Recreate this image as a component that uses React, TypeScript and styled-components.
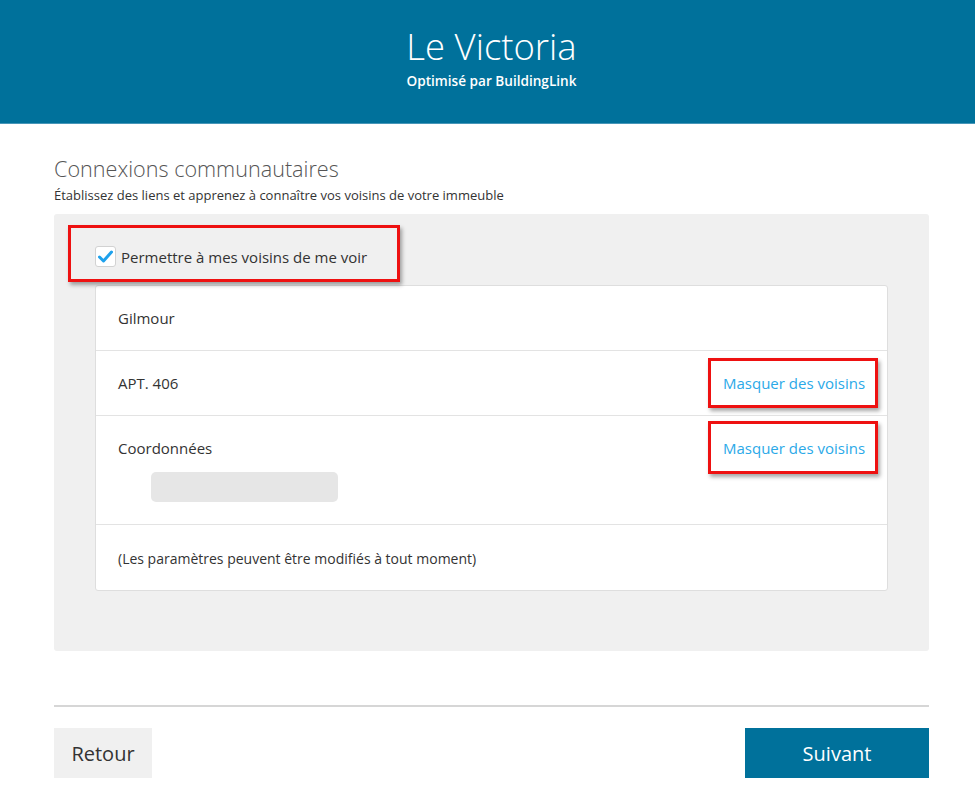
import React from "react";
import styled, { createGlobalStyle } from "styled-components";

const Global = createGlobalStyle`
  html, body { margin: 0; padding: 0; background: #fff; }
  body { font-family: "Open Sans", "Noto Sans", sans-serif; color: #333; }
  * { box-sizing: border-box; }
`;

const Header = styled.header`
  height: 124px;
  background: #00719b;
  border-bottom: 1px solid #4796b8;
  padding: 24px 0 0 8px;
  display: flex;
  flex-direction: column;
  align-items: center;
  color: #fff;
`;

const Title = styled.h1`
  margin: 0;
  font-size: 36.5px;
  font-weight: 300;
  line-height: 44px;
`;

const Powered = styled.div`
  margin-top: 4px;
  font-size: 13.6px;
  font-weight: 600;
  line-height: 18px;
`;

const Main = styled.main`
  margin: 0 46px 0 54px;
  padding-top: 32px;
`;

const SectionTitle = styled.h2`
  margin: 0;
  font-size: 21.6px;
  font-weight: 300;
  color: #555;
  line-height: 26px;
`;

const SectionSub = styled.p`
  margin: 4px 0 0;
  font-size: 13px;
  line-height: 18px;
  color: #333;
`;

const Panel = styled.section`
  margin-top: 10px;
  background: #f0f0f0;
  border-radius: 3px;
  padding: 11px 41px 60px 41px;
`;

const Highlight = styled.div<{ $h: number; $top?: number }>`
  display: inline-flex;
  align-items: center;
  height: ${(p) => p.$h}px;
  margin-top: ${(p) => p.$top ?? 0}px;
  border: 3px solid #ee1111;
  box-shadow: 2px 3px 4px rgba(0, 0, 0, 0.35);
`;

const CheckHighlight = styled(Highlight)`
  margin-left: -27px;
  padding: 6px 0 0 24px;
  width: 332px;
  margin-bottom: 3px;
`;

const CheckLabel = styled.label`
  display: flex;
  align-items: center;
  gap: 5px;
  font-size: 15px;
  color: #333;
  cursor: pointer;
`;

const Box = styled.span`
  width: 21px;
  height: 21px;
  background: #fff;
  border: 1px solid #d2d2d2;
  border-radius: 3px;
  display: flex;
  align-items: center;
  justify-content: center;
`;

const Card = styled.div`
  background: #fff;
  border: 1px solid #dedede;
  border-radius: 3px;
`;

const Row = styled.div`
  display: flex;
  justify-content: space-between;
  align-items: flex-start;
  min-height: 65px;
  padding: 0 9px 0 22px;
  border-bottom: 1px solid #e3e3e3;
  &:last-child { border-bottom: none; }
`;

const RowMain = styled.div`
  padding-top: 22px;
  font-size: 15px;
  line-height: 20px;
  color: #333;
`;

const Note = styled(RowMain)`
  padding-top: 24px;
  font-size: 14px;
`;

const LinkBox = styled(Highlight)`
  width: 170px;
  padding-left: 12px;
`;

const Link = styled.a`
  font-size: 15px;
  color: #2ba9e8;
  text-decoration: none;
  cursor: pointer;
`;

const Placeholder = styled.div`
  width: 187px;
  height: 30px;
  margin: 14px 0 22px 33px;
  background: #e6e6e6;
  border-radius: 5px;
`;

const Divider = styled.hr`
  margin: 54px 0 0;
  border: none;
  border-top: 2px solid #d6d6d6;
`;

const Footer = styled.div`
  display: flex;
  justify-content: space-between;
  margin-top: 21px;
`;

const Button = styled.button<{ $primary?: boolean }>`
  height: 50px;
  border: none;
  font-family: inherit;
  font-size: 20px;
  cursor: pointer;
  padding: 0;
  width: ${(p) => (p.$primary ? 184 : 98)}px;
  background: ${(p) => (p.$primary ? "#00719b" : "#f0f0f0")};
  color: ${(p) => (p.$primary ? "#fff" : "#333")};
`;

export default function App() {
  return (
    <>
      <Global />
      <Header>
        <Title>Le Victoria</Title>
        <Powered>Optimisé par BuildingLink</Powered>
      </Header>
      <Main>
        <SectionTitle>Connexions communautaires</SectionTitle>
        <SectionSub>Établissez des liens et apprenez à connaître vos voisins de votre immeuble</SectionSub>
        <Panel>
          <CheckHighlight $h={57}>
            <CheckLabel>
              <Box>
                <svg width="15" height="13" viewBox="0 0 15 13">
                  <path d="M1.5 7 L5.5 11 L13.5 2" fill="none" stroke="#1ea1ec" strokeWidth="3" strokeLinecap="round" strokeLinejoin="round" />
                </svg>
              </Box>
              Permettre à mes voisins de me voir
            </CheckLabel>
          </CheckHighlight>
          <Card>
            <Row>
              <RowMain>Gilmour</RowMain>
            </Row>
            <Row>
              <RowMain>APT. 406</RowMain>
              <LinkBox $h={50} $top={7}>
                <Link>Masquer des voisins</Link>
              </LinkBox>
            </Row>
            <Row>
              <div>
                <RowMain>Coordonnées</RowMain>
                <Placeholder />
              </div>
              <LinkBox $h={53} $top={5}>
                <Link>Masquer des voisins</Link>
              </LinkBox>
            </Row>
            <Row>
              <Note>(Les paramètres peuvent être modifiés à tout moment)</Note>
            </Row>
          </Card>
        </Panel>
        <Divider />
        <Footer>
          <Button>Retour</Button>
          <Button $primary>Suivant</Button>
        </Footer>
      </Main>
    </>
  );
}
